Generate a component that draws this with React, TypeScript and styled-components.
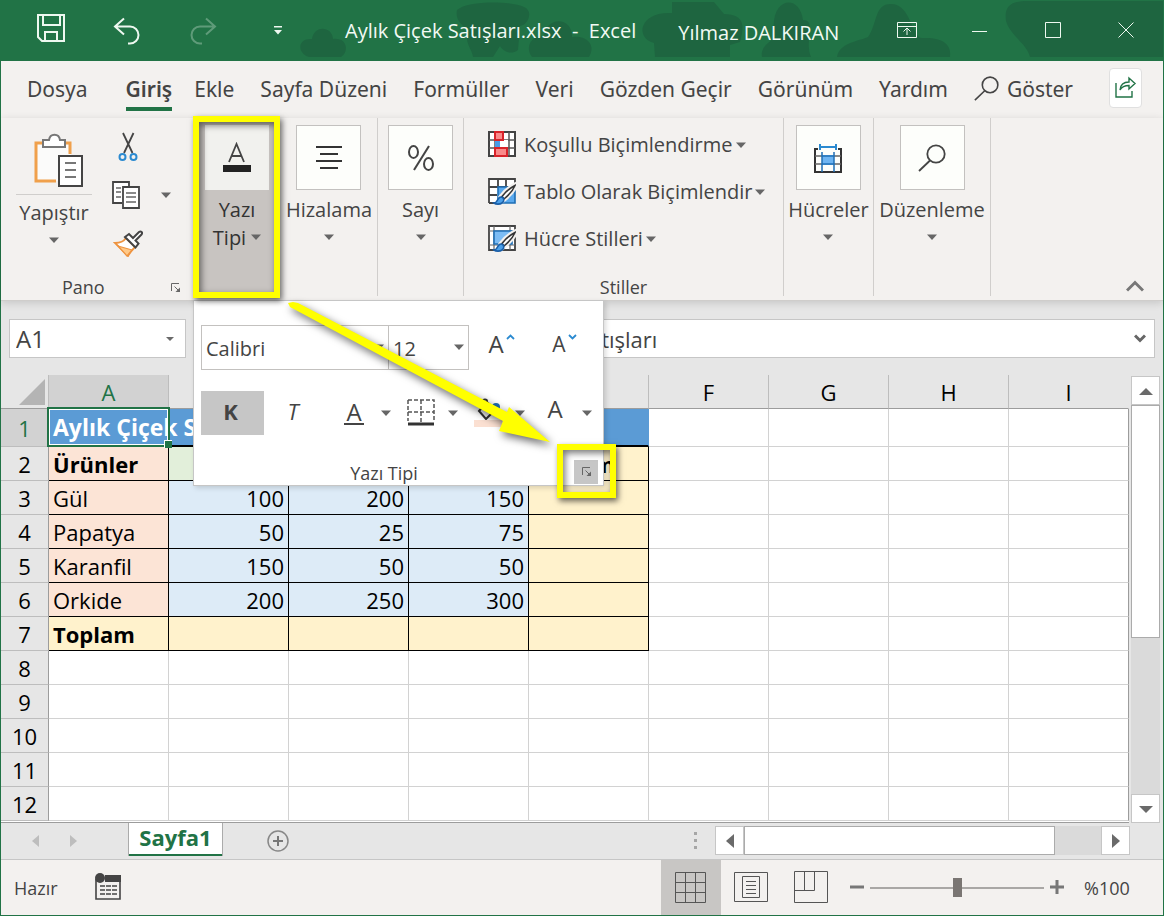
import React from 'react';
import styled, { createGlobalStyle, css } from 'styled-components';

const GlobalStyle = createGlobalStyle`
  *, *::before, *::after { box-sizing: border-box; }
  body { margin: 0; background: #217346; }
  body, button, input, select { font-family: 'Open Sans', 'Noto Sans', sans-serif; }
  button {
    margin: 0; padding: 0; border: 0; background: none; color: inherit;
    font-size: inherit; line-height: inherit; cursor: pointer;
  }
  a { color: inherit; text-decoration: none; }
  svg { display: block; flex: none; }
`;

const Window = styled.div`
  display: flex;
  flex-direction: column;
  border: solid #217346;
  border-width: 0 1px 1px;
  background: #e6e6e6;
  color: #444;
`;

/* ---------- title bar ---------- */

const TitleBar = styled.header`
  position: relative;
  display: flex;
  align-items: center;
  height: 61px;
  background: #217346;
  color: #f2faf4;
  font-size: 20px;
`;

const Clouds = styled.svg`
  position: absolute;
  right: 0;
  top: 0;
`;

const QuickAccess = styled.div`
  display: flex;
  padding-left: 12px;
`;

const BarButton = styled.button<{ $w: number; $dim?: boolean }>`
  display: flex;
  align-items: center;
  justify-content: center;
  width: ${(p) => p.$w}px;
  height: 60px;
  opacity: ${(p) => (p.$dim ? 0.3 : 1)};
`;

const DocTitle = styled.h1`
  position: relative;
  margin: 0 0 0 28px;
  font-size: 20px;
  font-weight: 400;
  white-space: pre;
`;

const UserName = styled.span`
  position: relative;
  margin-left: 42px;
  padding-top: 4px;
  white-space: nowrap;
`;

const WindowControls = styled.div`
  position: relative;
  display: flex;
  margin: 0 1px 0 auto;
`;

/* ---------- ribbon ---------- */

const Tabs = styled.nav`
  display: flex;
  align-items: center;
  height: 57px;
  padding: 0 21px 0 26px;
  background: #f3f1ef;
  font-family: 'Noto Sans', 'Open Sans', sans-serif;
  font-size: 21px;
  white-space: nowrap;
  button { font-family: inherit; }
`;

const Tab = styled.a<{ $active?: boolean }>`
  margin-right: 26px;
  padding-top: 2px;
  line-height: 36px;
  border-bottom: 4px solid transparent;
  &:first-child { margin-right: 38px; }
  ${(p) => p.$active && css`
    margin-right: 22px;
    border-color: #217346;
    font-weight: 600;
  `}
`;

const SearchTab = styled.button`
  display: flex;
  align-items: center;
  gap: 8px;
  height: 42px;
  padding-bottom: 2px;
`;

const ShareButton = styled.button`
  display: flex;
  align-items: center;
  justify-content: center;
  width: 33px;
  height: 40px;
  margin: 0 0 4px auto;
  border: 1px solid #e0e0e0;
  border-radius: 4px;
  background: #fff;
`;

const Ribbon = styled.div`
  position: relative;
  z-index: 2;
  display: flex;
  padding-bottom: 4px;
  border-bottom: 1px solid #cfcdcb;
  background: #f3f1ef;
  box-shadow: 0 2px 8px rgba(0, 0, 0, 0.14);
  font-size: 20px;
`;

const Group = styled.section<{ $w: number; $line?: boolean }>`
  position: relative;
  display: flex;
  flex-direction: column;
  align-items: center;
  width: ${(p) => p.$w}px;
  height: 178px;
  border-right: ${(p) => (p.$line ? '1px solid #d0cecc' : '0')};
`;

const GroupLabel = styled.div`
  display: flex;
  align-self: stretch;
  justify-content: center;
  margin-top: auto;
  font-size: 18px;
  line-height: 18px;
`;

const TileButton = styled.button<{ $pressed?: boolean }>`
  display: flex;
  flex-direction: column;
  align-items: center;
  padding-top: 7px;
  white-space: nowrap;
  ${(p) => p.$pressed && css`
    width: 76px;
    height: 178px;
    background: #c8c4c1;
    color: #333;
  `}
`;

const Tile = styled.span<{ $flat?: boolean }>`
  display: flex;
  align-items: center;
  justify-content: center;
  width: ${(p) => (p.$flat ? 64 : 65)}px;
  height: 65px;
  margin-bottom: 5px;
  border: ${(p) => (p.$flat ? '0' : '1px solid #c3c1bf')};
  background: ${(p) => (p.$flat ? '#f1f1ee' : '#fdfefb')};
`;

const TileLine = styled.span`
  display: flex;
  align-items: center;
  gap: 5px;
  height: 28px;
`;

const ClipboardRow = styled.div`
  display: flex;
  align-self: stretch;
  padding-left: 15px;
`;

const PasteButton = styled.button`
  display: flex;
  flex-direction: column;
  align-items: center;
  width: 76px;
  line-height: 36px;
  > svg { margin-top: 6px; }
`;

const PasteIcon = styled.span`
  display: flex;
  justify-content: center;
  width: 100%;
  height: 77px;
  padding: 14px 0 0 8px;
  border-bottom: 1px solid #d0cecc;
`;

const SmallTools = styled.div`
  display: flex;
  flex-direction: column;
  margin: 5px 0 0 16px;
`;

const SmallRow = styled.div`
  display: flex;
  align-items: center;
  gap: 13px;
  height: 48px;
`;

const IconButton = styled.button<{ $w: number }>`
  display: flex;
  align-items: center;
  justify-content: center;
  width: ${(p) => p.$w}px;
  height: 44px;
`;

const PanoLabel = styled(GroupLabel)`
  align-items: center;
  padding: 0 12px 0 61px;
  justify-content: space-between;
`;

const StyleList = styled.div`
  display: flex;
  flex-direction: column;
  align-self: stretch;
  padding: 3px 0 0 24px;
`;

const StyleButton = styled.button`
  display: flex;
  align-items: center;
  gap: 3px;
  height: 47px;
  white-space: nowrap;
  svg:first-child { margin-right: 5px; }
`;

const Collapse = styled.button`
  align-self: flex-end;
  margin: 0 19px 0 auto;
  padding: 4px 0;
`;

/* ---------- font flyout ---------- */

const Flyout = styled.div`
  position: absolute;
  left: 0;
  top: 182px;
  width: 411px;
  padding: 24px 0 0 7px;
  border: 1px solid #c6c6c6;
  background: #fff;
  box-shadow: 2px 2px 5px rgba(0, 0, 0, 0.15);
`;

const FlyoutRow = styled.div<{ $gap?: number }>`
  display: flex;
  align-items: center;
  gap: ${(p) => p.$gap || 0}px;
  height: 45px;
  & + & { margin-top: 20px; }
`;

const SelectBox = styled.label<{ $w: number }>`
  position: relative;
  width: ${(p) => p.$w}px;
  height: 45px;
  border: 1px solid #c3c1bf;
  & + & { border-left: 0; }
`;

const Select = styled.select`
  width: 100%;
  height: 100%;
  padding: 3px 4px 1px;
  appearance: none;
  border: 0;
  background: transparent;
  color: #444;
  font-size: 20px;
`;

const SelectCaret = styled.span`
  position: absolute;
  right: 4px;
  top: 18px;
  pointer-events: none;
`;

const BoldButton = styled.button`
  width: 63px;
  height: 44px;
  padding: 0 4px 4px 0;
  background: #c6c6c6;
  font-size: 22px;
  font-weight: 700;
`;

const ItalicButton = styled.button`
  width: 50px;
  height: 44px;
  margin-right: 10px;
  padding-bottom: 4px;
  font-size: 22px;
  font-style: italic;
`;

const Split = styled.div`
  display: flex;
  gap: 1px;
`;

const Letter = styled.span<{ $size: number; $line?: boolean }>`
  margin-bottom: ${(p) => (p.$line ? 0 : 8)}px;
  padding: 0 2px;
  border-bottom: ${(p) => (p.$line ? '2px solid #444' : '0')};
  font-size: ${(p) => p.$size}px;
  line-height: 22px;
`;

const Superscript = styled.span`
  align-self: flex-start;
  padding-top: 8px;
`;

const FlyoutFooter = styled.div`
  display: flex;
  align-items: center;
  height: 25px;
  margin: 24px 5px 1px -7px;
  font-size: 18px;
`;

const FooterLabel = styled.span`
  flex: 1;
  text-align: center;
  padding-top: 2px;
`;

const Launcher = styled.button<{ $on?: boolean }>`
  display: flex;
  align-items: center;
  justify-content: center;
  width: ${(p) => (p.$on ? 24 : 12)}px;
  height: ${(p) => (p.$on ? 24 : 12)}px;
  background: ${(p) => (p.$on ? '#c6c6c6' : 'none')};
`;

const Marker = styled.div<{ $x: number; $y: number; $w: number; $h: number }>`
  position: absolute;
  left: ${(p) => p.$x}px;
  top: ${(p) => p.$y}px;
  width: ${(p) => p.$w}px;
  height: ${(p) => p.$h}px;
  border: 6px solid #ff0;
  box-shadow: 2px 3px 6px rgba(0, 0, 0, 0.6), inset 2px 3px 7px rgba(0, 0, 0, 0.55);
  pointer-events: none;
`;

const Arrow = styled.svg`
  position: absolute;
  left: 91px;
  top: 180px;
  overflow: visible;
  filter: drop-shadow(3px 4px 4px rgba(0, 0, 0, 0.6));
  pointer-events: none;
`;

/* ---------- formula row ---------- */

const FormulaRow = styled.div`
  display: flex;
  justify-content: space-between;
  padding: 18px 8px 17px;
`;

const NameBox = styled.div`
  display: flex;
  align-items: center;
  width: 177px;
  height: 39px;
  padding-right: 8px;
  border: 1px solid #c6c6c6;
  background: #fff;
`;

const FormulaBox = styled(NameBox)`
  flex: 1;
  margin-left: 271px;
`;

const BareInput = styled.input<{ $size: number }>`
  flex: 1;
  min-width: 0;
  padding: 0 6px;
  border: 0;
  background: transparent;
  color: #444;
  font-size: ${(p) => p.$size}px;
  line-height: 32px;
`;

/* ---------- sheet ---------- */

const SheetArea = styled.div`
  display: flex;
`;

const SheetBody = styled.div`
  flex: 1;
  min-width: 0;
  border-bottom: 1px solid #9c9c9c;
  padding-bottom: 1px;
  background: #fff;
`;

const Sheet = styled.table`
  width: 100%;
  table-layout: fixed;
  border-spacing: 0;
  color: #000;
  font-size: 22px;
  line-height: 32px;
`;

const ColHead = styled.th<{ $on?: boolean }>`
  height: 34px;
  padding: 0;
  border-right: 1px solid #bdbdbd;
  border-bottom: 1px solid #9c9c9c;
  background: ${(p) => (p.$on ? '#d2d2d2' : '#e6e6e6')};
  color: ${(p) => (p.$on ? '#217346' : '#000')};
  font-weight: 400;
  &:last-child { border-right-color: #e6e6e6; }
`;

const Corner = styled.th`
  width: 48px;
  padding: 0 3px 3px 0;
  border-right: 1px solid #bdbdbd;
  border-bottom: 1px solid #9c9c9c;
  background: #e6e6e6;
  vertical-align: bottom;
  svg { margin-left: auto; }
`;

const RowHead = styled.th<{ $on?: boolean }>`
  padding: 0;
  border-right: 1px solid #9c9c9c;
  border-bottom: 1px solid #bdbdbd;
  background: ${(p) => (p.$on ? '#d2d2d2' : '#e6e6e6')};
  color: ${(p) => (p.$on ? '#217346' : '#000')};
  font-weight: 400;
`;

const Row = styled.tr<{ $h: number }>`
  height: ${(p) => p.$h}px;
`;

type Tone = 'plain' | 'blue' | 'peach' | 'green' | 'sky' | 'cream';
const tones: Record<Tone, string> = {
  plain: '#fff', blue: '#5b9bd5', peach: '#fce4d6', green: '#e2efda', sky: '#ddebf7', cream: '#fff2cc',
};

const Cell = styled.td<{ $tone: Tone; $bold?: boolean; $num?: boolean }>`
  padding: 0 4px;
  white-space: nowrap;
  border: solid ${(p) => (p.$tone === 'plain' ? '#d2d2d2' : '#000')};
  border-width: 0 1px 1px 0;
  background: ${(p) => tones[p.$tone]};
  font-weight: ${(p) => (p.$bold ? 700 : 400)};
  text-align: ${(p) => (p.$num ? 'right' : 'left')};
  ${(p) => p.$tone === 'blue' && css`
    border-right-color: #5b9bd5;
    border-bottom-width: 2px;
    color: #fff;
    font-size: 23px;
  `}
  &:nth-child(10) { border-right-color: #9c9c9c; }
`;

const SelectedCell = styled(Cell)`
  position: relative;
  &::before {
    content: '';
    position: absolute;
    inset: -2px;
    border: 2px solid #217346;
    box-shadow: inset 0 0 0 1px #fff;
  }
  &::after {
    content: '';
    position: absolute;
    right: -4px;
    bottom: -3px;
    width: 8px;
    height: 8px;
    border: solid #fff;
    border-width: 1px 0 0 1px;
    background: #217346;
  }
`;

const VScroll = styled.div`
  display: flex;
  flex-direction: column;
  width: 34px;
  padding: 1px 3px 0 2px;
`;

const ScrollButton = styled.button`
  display: flex;
  align-items: center;
  justify-content: center;
  width: 29px;
  height: 29px;
  border: 1px solid #c6c6c6;
  background: #fff;
`;

const VTrack = styled.div`
  flex: 1;
  background: #dadada;
  &::before {
    content: '';
    display: block;
    height: 60%;
    border: 1px solid #ababab;
    background: #fff;
  }
`;

/* ---------- sheet tabs and status bar ---------- */

const SheetTabs = styled.div`
  display: flex;
  align-items: center;
  height: 37px;
  padding-right: 33px;
  border-bottom: 1px solid #c6c6c6;
`;

const NavArrows = styled.div`
  display: flex;
  width: 127px;
  gap: 31px;
  padding-left: 31px;
`;

const SheetTab = styled.button`
  align-self: flex-start;
  width: 95px;
  height: 33px;
  padding-bottom: 6px;
  border: solid #ababab;
  border-width: 0 1px;
  box-shadow: inset 0 -2px 0 #217346;
  background: #fff;
  color: #217346;
  font-size: 22px;
  font-weight: 700;
  line-height: 26px;
`;

const AddSheet = styled.button`
  margin-left: 43px;
`;

const HScroll = styled.div`
  display: flex;
  width: 415px;
  margin: 0 0 1px 17px;
`;

const HTrack = styled.div`
  flex: 1;
  background: #dadada;
  &::before {
    content: '';
    display: block;
    width: 87%;
    height: 100%;
    border: 1px solid #ababab;
    background: #fff;
  }
`;

const Grip = styled.svg`
  margin-left: auto;
`;

const StatusBar = styled.footer`
  display: flex;
  align-items: center;
  height: 55px;
  padding-left: 13px;
  background: #f3f1ef;
  font-size: 18px;
`;

const MacroButton = styled.button`
  margin-left: 37px;
`;

const ViewButton = styled.button<{ $on?: boolean }>`
  display: flex;
  align-items: center;
  justify-content: center;
  width: 60px;
  height: 55px;
  background: ${(p) => (p.$on ? '#c8c6c4' : 'none')};
`;

const Views = styled.div`
  display: flex;
  margin-left: auto;
  padding-right: 9px;
`;

const ZoomRange = styled.input`
  width: 174px;
  height: 20px;
  margin: 0 6px;
  appearance: none;
  background: linear-gradient(#a9a7a5, #a9a7a5) center / 100% 2px no-repeat;
  &::-webkit-slider-thumb {
    appearance: none;
    width: 9px;
    height: 19px;
    background: #7a7673;
  }
`;

const ZoomLabel = styled.span`
  width: 79px;
  margin-left: 20px;
`;

/* ---------- drawings ---------- */

const Caret = ({ color = '#666' }: { color?: string }) => (
  <svg width="10" height="6" viewBox="0 0 10 6"><path d="M0 .5h10L5 6z" fill={color} /></svg>
);

const Triangle = ({ d, color = '#6a6a6a' }: { d: string; color?: string }) => (
  <svg width="14" height="14" viewBox="0 0 14 14"><path d={d} fill={color} /></svg>
);

const LaunchIcon = () => (
  <svg width="11" height="11" viewBox="0 0 11 11" fill="none" stroke="#666">
    <path d="M1.500 9V1.500H9M4.500 4.500l4 4" /><path d="M10 5.500V10H5.500z" fill="#666" stroke="none" />
  </svg>
);

const Magnifier = ({ size = 28 }: { size?: number }) => (
  <svg width={size} height={size} viewBox="0 0 28 28" fill="none" stroke="#444" strokeWidth="1.800">
    <circle cx="18" cy="10" r="8.700" /><path d="M12 16.500L1 27" />
  </svg>
);

const Brush = () => (
  <>
    <path d="M27 7C21 10 16 15 13 19l2 3c5-4 10-8 12-14z" fill="#f3f1ef" stroke="#f3f1ef" strokeWidth="5" />
    <path d="M27 7.500c-5 2.500-10 7-13 11l2 2.500c5-4 8.500-7.500 11-13.500z" fill="#fff" stroke="#333" strokeWidth="1.600" />
    <path d="M6 25c4 0 3-6 7-6 3 0 4 4 1 6-2 1.500-6 1.500-8 0z" fill="#4ba0ea" stroke="#1a5fa8" strokeWidth="1.600" />
  </>
);

const Icons = {
  save: (
    <svg width="30" height="36" viewBox="0 0 30 36" fill="none" stroke="#eef8f0" strokeWidth="2">
      <path d="M2 2h26v26H6l-4-4zM7 2v10h17V2M9 28V19h12v9" />
    </svg>
  ),
  undo: (
    <svg width="28" height="28" viewBox="0 0 28 28" fill="none" stroke="#eef8f0" strokeWidth="2">
      <path d="M11 1.500L2 9.500l9 8M2.500 9.500H17a8.500 8.500 0 0 1 0 17h-2" />
    </svg>
  ),
  redo: (
    <svg width="28" height="28" viewBox="0 0 28 28" fill="none" stroke="#eef8f0" strokeWidth="2">
      <path d="M17 1.500l9 8-9 8M25.500 9.500H11a8.500 8.500 0 0 0 0 17h2" />
    </svg>
  ),
  more: (
    <svg width="12" height="10" viewBox="0 0 12 10"><path d="M1 0h8v1.500H1zM1 4h8L5 8.500z" fill="#eef8f0" /></svg>
  ),
  ribbonMode: (
    <svg width="20" height="17" viewBox="0 0 20 17" fill="none" stroke="#eef8f0">
      <path d="M.5 .5h19v15H.5zM.5 4.500h19M10 13V6.500M6.500 9.500L10 6l3.500 3.500" />
    </svg>
  ),
  minimize: <svg width="16" height="16" viewBox="0 0 16 16"><path d="M0 8h15v1H0z" fill="#eef8f0" /></svg>,
  maximize: (
    <svg width="16" height="18" viewBox="0 0 16 18" fill="none" stroke="#eef8f0"><path d="M.5 .5h15v15H.5z" /></svg>
  ),
  close: (
    <svg width="16" height="18" viewBox="0 0 16 18" fill="none" stroke="#eef8f0"><path d="M.5 .5l15 15M15.500 .5l-15 15" /></svg>
  ),
  share: (
    <svg width="22" height="24" viewBox="0 0 22 24" fill="none" stroke="#217346" strokeWidth="1.400">
      <path d="M1 7v14h16v-6M5 14c.5-6 4-8 9-8V2l6 5.500-6 5.500V9.500c-4 0-7 1-9 4.500z" />
    </svg>
  ),
  paste: (
    <svg width="52" height="56" viewBox="0 0 52 56">
      <path d="M3 10h36v13H26v26H3z" fill="#fbfbfa" />
      <path d="M11 11H4v38h20M31 11h7v11" fill="none" stroke="#f0a04b" strokeWidth="3" />
      <path d="M11 15V8h6c1-7 10-7 11 0h5v7z" fill="#fff" stroke="#777" strokeWidth="2" />
      <path d="M27 24h23v30H27z" fill="#fff" stroke="#444" strokeWidth="2" />
      <path d="M33 31h11M33 38h11M33 45h11" stroke="#777" strokeWidth="2" />
    </svg>
  ),
  cut: (
    <svg width="20" height="30" viewBox="0 0 20 30" fill="none" strokeWidth="1.800">
      <path d="M5 1l9.500 20M15.500 1L6 21" stroke="#444" />
      <circle cx="4.500" cy="25" r="3" stroke="#2b8ad0" strokeWidth="2" /><circle cx="15.500" cy="25" r="3" stroke="#2b8ad0" strokeWidth="2" />
    </svg>
  ),
  copy: (
    <svg width="30" height="30" viewBox="0 0 30 30" fill="#fff" stroke="#444" strokeWidth="1.800">
      <path d="M11 23H2V2h16v5" /><path d="M12 7h16v21H12z" />
      <path d="M5 8h5M5 12h5M5 17h5M15 13h10M15 17h10M15 22h10" stroke="#666" strokeWidth="1.500" />
    </svg>
  ),
  painter: (
    <svg width="30" height="28" viewBox="0 0 30 28">
      <path d="M2 14c6 0 9-2 11-5l9 9c-3 3-5 5-7 9z" fill="#fff" stroke="#ee9440" strokeWidth="1.800" />
      <path d="M5 17l14 4-5 6z" fill="#ffc988" stroke="#ee9440" strokeWidth="1.200" />
      <path d="M12 8l4-3 4 4 6-6c2-1.500 4 .5 2.500 2.500l-6 6 3 3-3 4z" fill="#fff" stroke="#444" strokeWidth="2" />
    </svg>
  ),
  fontColor: (
    <svg width="30" height="32" viewBox="0 0 30 32">
      <path d="M7 20L14.500 2 22 20M9.500 14h10" fill="none" stroke="#444" strokeWidth="1.800" /><path d="M1 23h28v7H1z" fill="#222" />
    </svg>
  ),
  align: (
    <svg width="26" height="26" viewBox="0 0 26 26" stroke="#333" strokeWidth="2">
      <path d="M0 2h26M4 9h18M0 16h26M4 23h18" />
    </svg>
  ),
  percent: (
    <svg width="28" height="28" viewBox="0 0 28 28" fill="none" stroke="#444" strokeWidth="2">
      <ellipse cx="6.500" cy="8" rx="4.500" ry="6" /><ellipse cx="21.500" cy="20" rx="4.500" ry="6" /><path d="M22 2L7 26" />
    </svg>
  ),
  cells: (
    <svg width="30" height="30" viewBox="0 0 30 30" fill="none" strokeWidth="2">
      <path d="M5 6H2v23h26V6h-3" stroke="#333" /><path d="M2 13h26M2 21h26" stroke="#666" strokeWidth="1.500" />
      <path d="M9 12h12v10H9z" fill="#6db4f2" /><path d="M9 9v20M21 9v20M9 13h12M9 21h12" stroke="#1f6fb5" strokeWidth="1.500" />
      <path d="M7 1v6M23 1v6M7 4h16" stroke="#2b8ad0" />
    </svg>
  ),
  find: <Magnifier />,
  conditional: (
    <svg width="28" height="27" viewBox="0 0 28 27" fill="none">
      <path d="M1 1h26v24H1z" fill="#fff" stroke="#444" strokeWidth="2" />
      <path d="M1 9h26M1 17h26M7 1v24M21 1v24" stroke="#555" strokeWidth="1.500" />
      <path d="M7 9h5v8H7z" fill="#4a9be8" /><path d="M12 9h8v8h-8z" fill="#fff" />
      <path d="M7 1h8v8H7zM7 17h12v8H7z" fill="#f98a8a" stroke="#d8232a" strokeWidth="2" />
    </svg>
  ),
  formatTable: (
    <svg width="28" height="27" viewBox="0 0 28 27" fill="none">
      <path d="M1 1h26v24H1z" fill="#fff" /><path d="M1 25V1h26v6M1 9h26M1 17h8M10 1v8M18 1v8M1 25h7" stroke="#444" strokeWidth="1.800" />
      <path d="M10 9h17v16H10z" fill="#5aa9ee" stroke="#1f6fb5" strokeWidth="1.600" />
      <Brush />
    </svg>
  ),
  cellStyles: (
    <svg width="28" height="27" viewBox="0 0 28 27" fill="none">
      <path d="M1 1h26v24H1z" fill="#fff" stroke="#444" strokeWidth="1.800" />
      <path d="M1 6h26M6 1v24M22 1v24M1 20h26" stroke="#666" strokeWidth="1.200" />
      <path d="M6 6h18v13H6z" fill="#7cbcf4" stroke="#1f6fb5" strokeWidth="1.600" /><Brush />
    </svg>
  ),
  borders: (
    <svg width="28" height="28" viewBox="0 0 28 28" fill="none" stroke="#555" strokeWidth="1.500">
      <path d="M1 1h26v21M1 1v21M14 1v22M1 13h26" strokeDasharray="4 2" /><path d="M1 25h26" stroke="#333" strokeWidth="3" />
    </svg>
  ),
  fill: (
    <svg width="28" height="30" viewBox="0 0 28 30" fill="none">
      <path d="M5 13l8-9 8 8-9 9zM9 9V3c0-2 4-2 4 0v8" stroke="#333" strokeWidth="2" />
      <circle cx="22" cy="9" r="4" fill="#1f6fb5" /><path d="M0 22h28v7H0z" fill="#fbe0d2" />
    </svg>
  ),
  add: (
    <svg width="24" height="24" viewBox="0 0 24 24" fill="none" stroke="#888" strokeWidth="1.500">
      <circle cx="12" cy="12" r="10" /><path d="M12 7v10M7 12h10" stroke="#777" strokeWidth="2" />
    </svg>
  ),
  macro: (
    <svg width="26" height="29" viewBox="0 0 26 29" fill="none">
      <path d="M1 6v20h24V4" stroke="#444" strokeWidth="1.600" /><path d="M10 2h16v7H10z" fill="#444" />
      <circle cx="5" cy="5" r="5" fill="#444" />
      <path d="M5 13h17M5 17h17M5 21h17" stroke="#444" strokeWidth="1.600" strokeDasharray="5 1" />
    </svg>
  ),
  normalView: (
    <svg width="32" height="32" viewBox="0 0 32 32" fill="none" stroke="#555">
      <path d="M.5 .5h30v30H.5zM10.500 .5v30M20.500 .5v30M.5 10.500h30M.5 20.500h30" />
    </svg>
  ),
  pageView: (
    <svg width="34" height="32" viewBox="0 0 34 32" fill="none" stroke="#555">
      <path d="M.5 .5h33v29H.5zM8.500 4.500h17v21h-17zM12 9.500h10M12 13.500h10M12 17.500h10M12 21.500h10" />
    </svg>
  ),
  breakView: (
    <svg width="34" height="34" viewBox="0 0 34 34" fill="none" stroke="#555">
      <path d="M.5 .5h33v31H.5zM.5 19.500h20V.5M10.500 .5v19" />
    </svg>
  ),
};

/* ---------- data ---------- */

const columns = ['A', 'B', 'C', 'D', 'E', 'F', 'G', 'H', 'I'];
const tabNames = ['Dosya', 'Giriş', 'Ekle', 'Sayfa Düzeni', 'Formüller', 'Veri', 'Gözden Geçir', 'Görünüm', 'Yardım'];

const sheetRows: string[][] = [
  ['Aylık Çiçek Satışları'],
  ['Ürünler', '', '', '', 'Toplam'],
  ['Gül', '100', '200', '150'],
  ['Papatya', '50', '25', '75'],
  ['Karanfil', '150', '50', '50'],
  ['Orkide', '200', '250', '300'],
  ['Toplam'],
  [], [], [], [], [],
];

const toneOf = (r: number, c: number): Tone => {
  if (c > 4 || r > 6) return 'plain';
  if (r === 0) return 'blue';
  if (c === 4 || r === 6) return 'cream';
  if (c === 0) return 'peach';
  return r === 1 ? 'green' : 'sky';
};

interface BigButtonProps { icon: React.ReactNode; label: string }
const BigButton = ({ icon, label }: BigButtonProps) => (
  <TileButton>
    <Tile>{icon}</Tile>
    <TileLine>{label}</TileLine>
    <TileLine><Caret /></TileLine>
  </TileButton>
);

const SplitButton = ({ label, children }: { label: string; children: React.ReactNode }) => (
  <Split>
    <IconButton $w={44} aria-label={label}>{children}</IconButton>
    <IconButton $w={18} aria-label={`${label} seçenekleri`}><Caret /></IconButton>
  </Split>
);

const FontFlyout = () => (
  <Flyout>
    <FlyoutRow>
      <SelectBox $w={188}>
        <Select aria-label="Yazı tipi" defaultValue="Calibri"><option>Calibri</option></Select>
        <SelectCaret><Caret /></SelectCaret>
      </SelectBox>
      <SelectBox $w={80}>
        <Select aria-label="Boyut" defaultValue="12"><option>12</option></Select>
        <SelectCaret><Caret /></SelectCaret>
      </SelectBox>
      <IconButton $w={63} aria-label="Büyüt">
        <Letter $size={24}>A</Letter>
        <Superscript><svg width="9" height="6" viewBox="0 0 9 6" fill="none" stroke="#2b8ad0" strokeWidth="1.800"><path d="M1 5l3.500-3.500L8 5" /></svg></Superscript>
      </IconButton>
      <IconButton $w={63} aria-label="Küçült">
        <Letter $size={21}>A</Letter>
        <Superscript><svg width="9" height="6" viewBox="0 0 9 6" fill="none" stroke="#2b8ad0" strokeWidth="1.800"><path d="M1 1l3.500 3.500L8 1" /></svg></Superscript>
      </IconButton>
    </FlyoutRow>
    <FlyoutRow $gap={4}>
      <BoldButton>K</BoldButton>
      <ItalicButton>T</ItalicButton>
      <SplitButton label="Altı çizili"><Letter $size={24} $line>A</Letter></SplitButton>
      <SplitButton label="Kenarlıklar">{Icons.borders}</SplitButton>
      <SplitButton label="Dolgu rengi">{Icons.fill}</SplitButton>
      <SplitButton label="Yazı rengi"><Letter $size={24}>A</Letter></SplitButton>
    </FlyoutRow>
    <FlyoutFooter>
      <FooterLabel>Yazı Tipi</FooterLabel>
      <Launcher $on aria-label="Yazı tipi ayarları"><LaunchIcon /></Launcher>
    </FlyoutFooter>
  </Flyout>
);

export default function App() {
  return (
    <Window>
      <GlobalStyle />
      <TitleBar>
        <Clouds width="870" height="61" viewBox="293 0 870 61" fill="#1e6540">
          <path d="M309 57c-12-4-12-19 3-18 2-14 20-13 21 0 15-2 16 14 8 18z" />
          <path d="M457 10C468 0 512 1 524 7c10 4 4 18-4 19l-2 24c-8 6-16 0-18-4l-7 11h-20c-1-9-10-15-4-27-8-5-14-11-12-20z" />
          <path d="M532 57c-8-11 1-23 12-20 2-22 29-20 28 0 16-2 24 9 17 20z" />
          <path d="M655 57l-1-14c-20-6-14-32 18-30V2h42l10 12c22 0 20 14 16 28l-10 3v12z" />
          <path d="M762 57c-2-10 8-15 13-20-8-38 24-46 28-17 14 0 1 22 8 37z" />
          <path d="M837 57c2-14 22-16 31-20 10-14 6-34 24-33 19 1 20 34 30 34 20-1 30 6 28 19z" />
          <path d="M1030 57c-3-13-20-22-24-36-2-14 4-20 22-20h135v56z" />
        </Clouds>
        <QuickAccess>
          <BarButton $w={76} aria-label="Kaydet">{Icons.save}</BarButton>
          <BarButton $w={76} aria-label="Geri al">{Icons.undo}</BarButton>
          <BarButton $w={76} $dim aria-label="Yinele">{Icons.redo}</BarButton>
          <BarButton $w={76} aria-label="Özelleştir">{Icons.more}</BarButton>
        </QuickAccess>
        <DocTitle>{'Aylık Çiçek Satışları.xlsx  -  Excel'}</DocTitle>
        <UserName>Yılmaz DALKIRAN</UserName>
        <WindowControls>
          <BarButton $w={73} aria-label="Şerit görünümü">{Icons.ribbonMode}</BarButton>
          <BarButton $w={73} aria-label="Küçült">{Icons.minimize}</BarButton>
          <BarButton $w={73} aria-label="Büyüt">{Icons.maximize}</BarButton>
          <BarButton $w={73} aria-label="Kapat">{Icons.close}</BarButton>
        </WindowControls>
      </TitleBar>

      <Tabs>
        {tabNames.map((name) => (
          <Tab key={name} href="#" $active={name === 'Giriş'}>{name}</Tab>
        ))}
        <SearchTab><Magnifier size={25} />Göster</SearchTab>
        <ShareButton aria-label="Paylaş">{Icons.share}</ShareButton>
      </Tabs>

      <Ribbon>
        <Group $w={192}>
          <ClipboardRow>
            <PasteButton>
              <PasteIcon>{Icons.paste}</PasteIcon>
              Yapıştır
              <Caret />
            </PasteButton>
            <SmallTools>
              <SmallRow><IconButton $w={40} aria-label="Kes">{Icons.cut}</IconButton></SmallRow>
              <SmallRow>
                <IconButton $w={36} aria-label="Kopyala">{Icons.copy}</IconButton>
                <IconButton $w={18} aria-label="Kopyalama seçenekleri"><Caret /></IconButton>
              </SmallRow>
              <SmallRow><IconButton $w={40} aria-label="Biçim boyacısı">{Icons.painter}</IconButton></SmallRow>
            </SmallTools>
          </ClipboardRow>
          <PanoLabel>Pano<Launcher aria-label="Pano ayarları"><LaunchIcon /></Launcher></PanoLabel>
        </Group>
        <Group $w={88}>
          <TileButton $pressed>
            <Tile $flat>{Icons.fontColor}</Tile>
            <TileLine>Yazı</TileLine>
            <TileLine>Tipi <Caret /></TileLine>
          </TileButton>
          <FontFlyout />
          <Marker $x={0} $y={-2} $w={87} $h={182} />
          <Marker $x={364} $y={326} $w={59} $h={54} />
          <Arrow width="270" height="150" viewBox="284 298 270 150">
            <path d="M288 303l5-1 5 1 209 109 2-5 41 35-51-11 4-10-213-114z" fill="#ff0" />
          </Arrow>
        </Group>
        <Group $w={97} $line><BigButton icon={Icons.align} label="Hizalama" /></Group>
        <Group $w={86} $line><BigButton icon={Icons.percent} label="Sayı" /></Group>
        <Group $w={320} $line>
          <StyleList>
            <StyleButton>{Icons.conditional}Koşullu Biçimlendirme<Caret /></StyleButton>
            <StyleButton>{Icons.formatTable}Tablo Olarak Biçimlendir<Caret /></StyleButton>
            <StyleButton>{Icons.cellStyles}Hücre Stilleri<Caret /></StyleButton>
          </StyleList>
          <GroupLabel>Stiller</GroupLabel>
        </Group>
        <Group $w={90} $line><BigButton icon={Icons.cells} label="Hücreler" /></Group>
        <Group $w={117} $line><BigButton icon={Icons.find} label="Düzenleme" /></Group>
        <Collapse aria-label="Şeridi daralt">
          <svg width="18" height="12" viewBox="0 0 18 12" fill="none" stroke="#777" strokeWidth="3"><path d="M1 10.500l8-8 8 8" /></svg>
        </Collapse>
      </Ribbon>

      <FormulaRow>
        <NameBox>
          <BareInput $size={24} aria-label="Ad kutusu" defaultValue="A1" />
          <Triangle d="M3 5h8L7 9z" />
        </NameBox>
        <FormulaBox>
          <BareInput $size={22} aria-label="Formül çubuğu" defaultValue="Aylık Çiçek Satışları" />
          <svg width="12" height="9" viewBox="0 0 12 9" fill="none" stroke="#666" strokeWidth="3"><path d="M1 1.500l5 5 5-5" /></svg>
        </FormulaBox>
      </FormulaRow>

      <SheetArea>
        <SheetBody>
          <Sheet>
            <thead>
              <tr>
                <Corner><svg width="26" height="26" viewBox="0 0 26 26"><path d="M26 0v26H0z" fill="#b4b4b4" /></svg></Corner>
                {columns.map((c) => <ColHead key={c} $on={c === 'A'}>{c}</ColHead>)}
              </tr>
            </thead>
            <tbody>
              {sheetRows.map((values, r) => (
                <Row key={r} $h={r === 0 ? 38 : 34}>
                  <RowHead $on={r === 0}>{r + 1}</RowHead>
                  {columns.map((col, c) => {
                    const Td = r === 0 && c === 0 ? SelectedCell : Cell;
                    return (
                      <Td
                        key={col}
                        $tone={toneOf(r, c)}
                        $bold={r < 2 || r === 6}
                        $num={r > 1 && c > 0}
                      >
                        {values[c]}
                      </Td>
                    );
                  })}
                </Row>
              ))}
            </tbody>
          </Sheet>
        </SheetBody>
        <VScroll>
          <ScrollButton aria-label="Yukarı kaydır"><Triangle d="M0 11h14L7 4z" /></ScrollButton>
          <VTrack />
          <ScrollButton aria-label="Aşağı kaydır"><Triangle d="M0 4h14l-7 7z" /></ScrollButton>
        </VScroll>
      </SheetArea>

      <SheetTabs>
        <NavArrows>
          <svg width="7" height="12" viewBox="0 0 7 12"><path d="M7 0v12L0 6z" fill="#bdbdbd" /></svg>
          <svg width="7" height="12" viewBox="0 0 7 12"><path d="M0 0v12l7-6z" fill="#bdbdbd" /></svg>
        </NavArrows>
        <SheetTab>Sayfa1</SheetTab>
        <AddSheet aria-label="Yeni sayfa">{Icons.add}</AddSheet>
        <Grip width="4" height="18" viewBox="0 0 4 18"><path d="M0 0h3v3H0zM0 7h3v3H0zM0 14h3v3H0z" fill="#a6a6a6" /></Grip>
        <HScroll>
          <ScrollButton aria-label="Sola kaydır"><Triangle d="M11 0v14L3 7z" /></ScrollButton>
          <HTrack />
          <ScrollButton aria-label="Sağa kaydır"><Triangle d="M3 0v14l8-7z" /></ScrollButton>
        </HScroll>
      </SheetTabs>

      <StatusBar>
        Hazır
        <MacroButton aria-label="Makro kaydet">{Icons.macro}</MacroButton>
        <Views>
          <ViewButton $on aria-label="Normal">{Icons.normalView}</ViewButton>
          <ViewButton aria-label="Sayfa düzeni">{Icons.pageView}</ViewButton>
          <ViewButton aria-label="Sayfa sonu önizleme">{Icons.breakView}</ViewButton>
        </Views>
        <IconButton $w={14} aria-label="Uzaklaştır">
          <svg width="14" height="16" viewBox="0 0 14 16"><path d="M0 5.500h14v3H0z" fill="#777" /></svg>
        </IconButton>
        <ZoomRange type="range" min="0" max="200" defaultValue="100" aria-label="Yakınlaştırma" />
        <IconButton $w={14} aria-label="Yakınlaştır">
          <svg width="14" height="16" viewBox="0 0 14 16"><path d="M0 5.500h14v3H0zM5.500 0h3v14h-3z" fill="#777" /></svg>
        </IconButton>
        <ZoomLabel>%100</ZoomLabel>
      </StatusBar>
    </Window>
  );
}
